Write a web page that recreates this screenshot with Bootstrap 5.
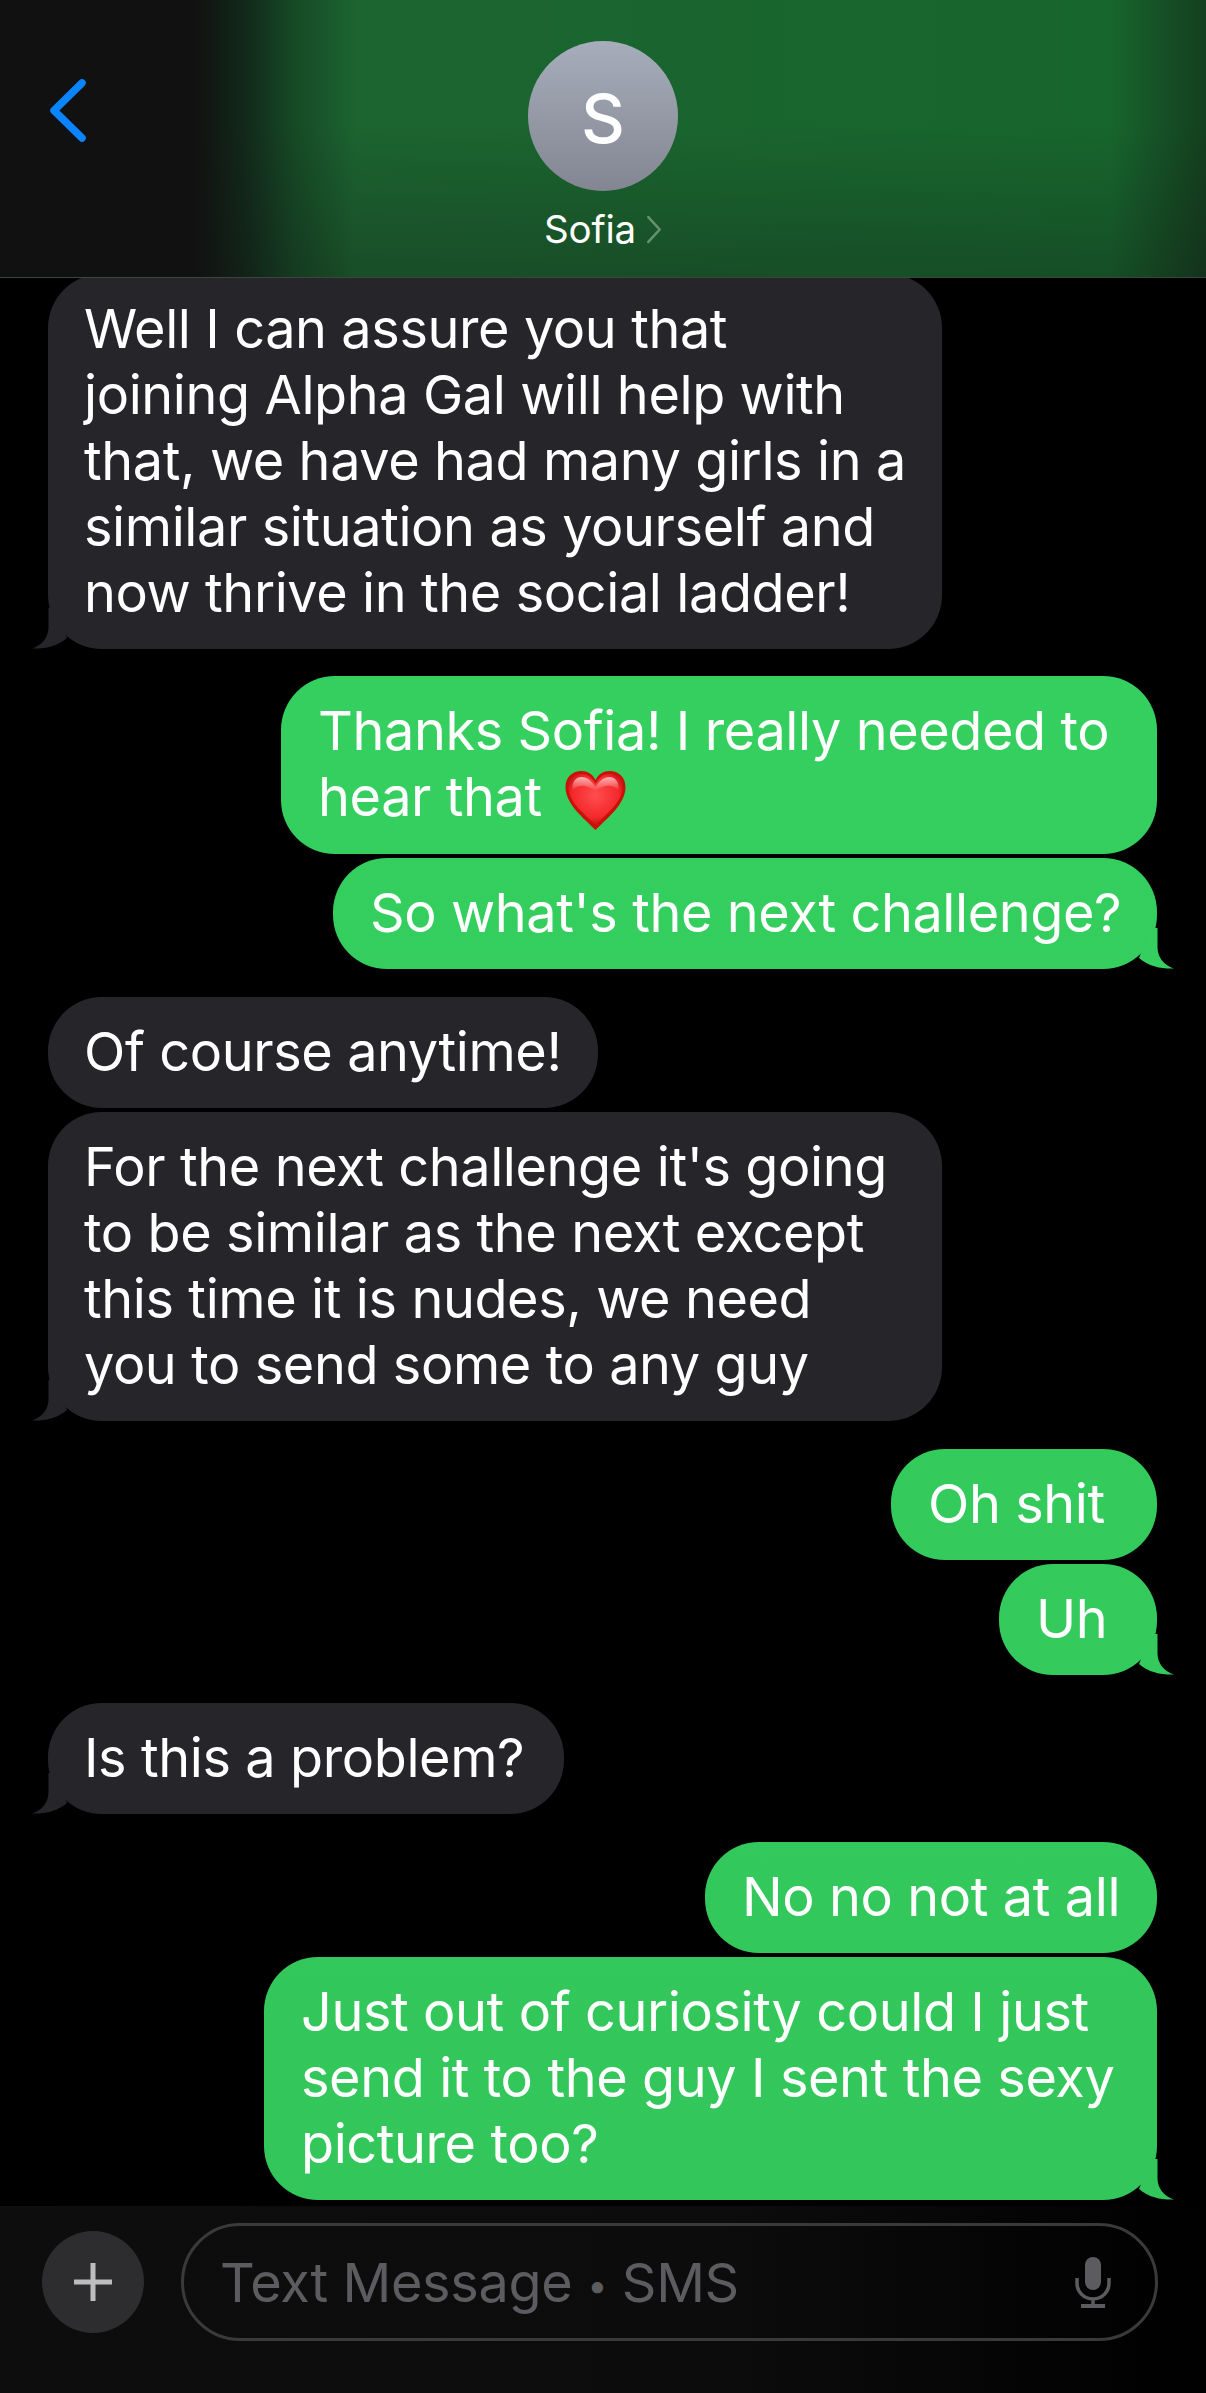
<!DOCTYPE html>
<html lang="en">
<head>
  <meta charset="UTF-8">
  <meta name="viewport" content="width=device-width, initial-scale=1.0">
  <title>Sofia</title>
  <link href="https://cdn.jsdelivr.net/npm/bootstrap@5.3.0/dist/css/bootstrap.min.css" rel="stylesheet">
  <style>
    body { background: #000; font-family: Inter, "Liberation Sans", sans-serif; }
    .phone { height: 2393px; }
    .chat-head { height: 278px; padding-top: 41px; border-bottom: 1px solid #3c463f;
      background:
        linear-gradient(to bottom, rgba(0,0,0,0) 45%, rgba(17,17,17,.28) 100%),
        linear-gradient(to right, #111 0, #111 195px, #12291a 245px, #164a26 295px, #1c6430 355px, #17662d 1110px, #143f1f 1206px); }
    .back-btn { left: 50px; top: 79px; width: 37px; height: 63px; }
    .avatar { width: 150px; height: 150px; padding-top: 3px; background: linear-gradient(#a7adbb, #838692); font-size: 68px; font-weight: 500; }
    .head-name { margin-top: 14px; font-size: 38.500px; line-height: 48px; letter-spacing: -.2px; }
    .head-name svg { width: 16px; height: 29px; margin-left: 10px; }
    .thread { padding: 0 49px 0 48px; margin-top: -4px; }
    .bubble { position: relative; padding: 22px 0 23px 37px; border-radius: 54px; color: #fff;
      font-size: 54px; line-height: 66px; letter-spacing: -.4px; white-space: nowrap; }
    .bubble + .bubble { margin-top: 4px; }
    .them { background: #26252a; fill: #26252a; padding-left: 36px; }
    .me { background: #34cd5e linear-gradient(#35d461, #33c55a) fixed; fill: #34cf5e; margin-left: auto; }
    .gap-top { margin-top: 28px !important; }
    .gap-27 { margin-top: 27px !important; }
    .bw-894 { width: 894px; }
    .bw-893 { width: 893px; }
    .bw-876 { width: 876px; }
    .bw-824 { width: 824px; }
    .bw-550 { width: 550px; }
    .bw-516 { width: 516px; }
    .bw-452 { width: 452px; }
    .bw-266 { width: 266px; }
    .bw-158 { width: 158px; }
    .fill-mid { fill: #34ca5d; }
    .fill-low { fill: #33c65b; }
    .tail { position: absolute; bottom: 0; width: 41px; height: 41px; }
    .them .tail { left: -16px; transform: scaleX(-1); }
    .me .tail { right: -17px; }
    .heart { width: 63px; height: 61px; vertical-align: -15px; margin-left: 7px; }
    .composer { height: 187px; padding: 17px 48px 0 42px; background: linear-gradient(to right, #0d0d0e 0, #0c0c0d 60%, #000 100%); }
    .plus-btn { width: 102px; height: 102px; margin-top: 8px; margin-right: 37px; background: #2d2d2f; }
    .plus-btn svg { width: 40px; height: 40px; }
    .msg-box { height: 118px; padding: 0 44px 0 36px; border: 3px solid #3a3a3c; border-radius: 59px; color: #5c5c60; font-size: 54px; letter-spacing: -.35px; }
    .msg-box svg { width: 36px; height: 51px; }
    .dot-sep { font-size: 36px; vertical-align: 4px; }
  </style>
</head>
<body>
  <div class="phone d-flex flex-column overflow-hidden">
    <div class="chat-head position-relative d-flex flex-column align-items-center flex-shrink-0" style="z-index: 2">
      <svg class="back-btn position-absolute" viewBox="0 0 37 63" fill="none" stroke="#0a84ff" stroke-width="7.5" stroke-linecap="round" stroke-linejoin="round"><path d="M32 4 4 31.500l28 27.500"/></svg>
      <div class="avatar rounded-circle d-flex align-items-center justify-content-center text-white">S</div>
      <div class="head-name d-flex align-items-center text-white">Sofia<svg viewBox="0 0 15 28" fill="none" stroke="#68906f" stroke-width="2.500" stroke-linecap="round" stroke-linejoin="round"><path d="M2 2 13 14 2 26"/></svg></div>
    </div>

    <div class="thread flex-grow-1">
      <div class="bubble them bw-894">Well I can assure you that<br>joining Alpha Gal will help with<br>that, we have had many girls in a<br>similar situation as yourself and<br>now thrive in the social ladder!<svg class="tail" viewBox="0 0 41 41"><use href="#tail"/></svg></div>

      <div class="bubble me bw-876 gap-27">Thanks Sofia! I really needed to<br>hear that <svg class="heart" viewBox="0 0 62 61"><defs><radialGradient id="hg" cx=".5" cy=".42" r=".62"><stop offset="0" stop-color="#ff4d4f"/><stop offset=".7" stop-color="#f4282b"/><stop offset="1" stop-color="#b80f0f"/></radialGradient><linearGradient id="hs" x1="0" y1="0" x2="0" y2="1"><stop offset="0" stop-color="#fff" stop-opacity=".65"/><stop offset="1" stop-color="#fff" stop-opacity="0"/></linearGradient></defs><path d="M31 60C19 48 1 34 1 17 1 7 8 1 17 1c6 0 11 3 14 9 3-6 8-9 14-9 9 0 16 6 16 16 0 17-18 31-30 43Z" fill="#c91109"/><path d="M31 55C20 44 4 32 4 17 4 9 10 4 17 4c6 0 11 4 14 10 3-6 8-10 14-10 7 0 13 5 13 13 0 15-16 27-27 38Z" fill="url(#hg)"/><path d="M8 20C7 11 12 7 17 7c6 0 10 4 14 10 4-6 8-10 14-10 5 0 10 4 9 13-4-4-9-5-13-4-4 1-7 3-10 5-3-2-6-4-10-5-4-1-9 0-13 4Z" fill="url(#hs)"/></svg></div>
      <div class="bubble me bw-824">So what's the next challenge?<svg class="tail" viewBox="0 0 41 41"><use href="#tail"/></svg></div>

      <div class="bubble them bw-550 gap-top">Of course anytime!</div>
      <div class="bubble them bw-894">For the next challenge it's going<br>to be similar as the next except<br>this time it is nudes, we need<br>you to send some to any guy<svg class="tail" viewBox="0 0 41 41"><use href="#tail"/></svg></div>

      <div class="bubble me bw-266 gap-top">Oh shit</div>
      <div class="bubble me bw-158 fill-mid">Uh<svg class="tail" viewBox="0 0 41 41"><use href="#tail"/></svg></div>

      <div class="bubble them bw-516 gap-top">Is this a problem?<svg class="tail" viewBox="0 0 41 41"><use href="#tail"/></svg></div>

      <div class="bubble me bw-452 gap-top">No no not at all</div>
      <div class="bubble me bw-893 fill-low">Just out of curiosity could I just<br>send it to the guy I sent the sexy<br>picture too?<svg class="tail" viewBox="0 0 41 41"><use href="#tail"/></svg></div>
    </div>

    <div class="composer d-flex align-items-start flex-shrink-0">
      <div class="plus-btn rounded-circle d-flex align-items-center justify-content-center flex-shrink-0">
        <svg viewBox="0 0 40 40" fill="none" stroke="#bdbdbf" stroke-width="5"><path d="M20 1v38M1 20h38"/></svg>
      </div>
      <div class="msg-box flex-grow-1 d-flex align-items-center justify-content-between">
        <span>Text Message <span class="dot-sep">•</span> SMS</span>
        <svg viewBox="0 0 36 51" fill="none" stroke="#5c5c60" stroke-width="3.500"><rect x="10" y="0" width="16" height="33" rx="8" fill="#5c5c60" stroke="none"/><path d="M2 21v5c0 9 7 16 16 16s16-7 16-16v-5M18 42v6"/><path d="M6 49h24" stroke-width="4"/></svg>
      </div>
    </div>
  </div>

  <svg width="0" height="0" class="position-absolute">
    <symbol id="tail" viewBox="0 0 41 41"><path d="M18 0h6.500v20C25 29 30 37 41 40.500 30 41 16 39 6 30Z"/></symbol>
  </svg>

  <script src="https://cdn.jsdelivr.net/npm/bootstrap@5.3.0/dist/js/bootstrap.bundle.min.js"></script>
</body>
</html>
